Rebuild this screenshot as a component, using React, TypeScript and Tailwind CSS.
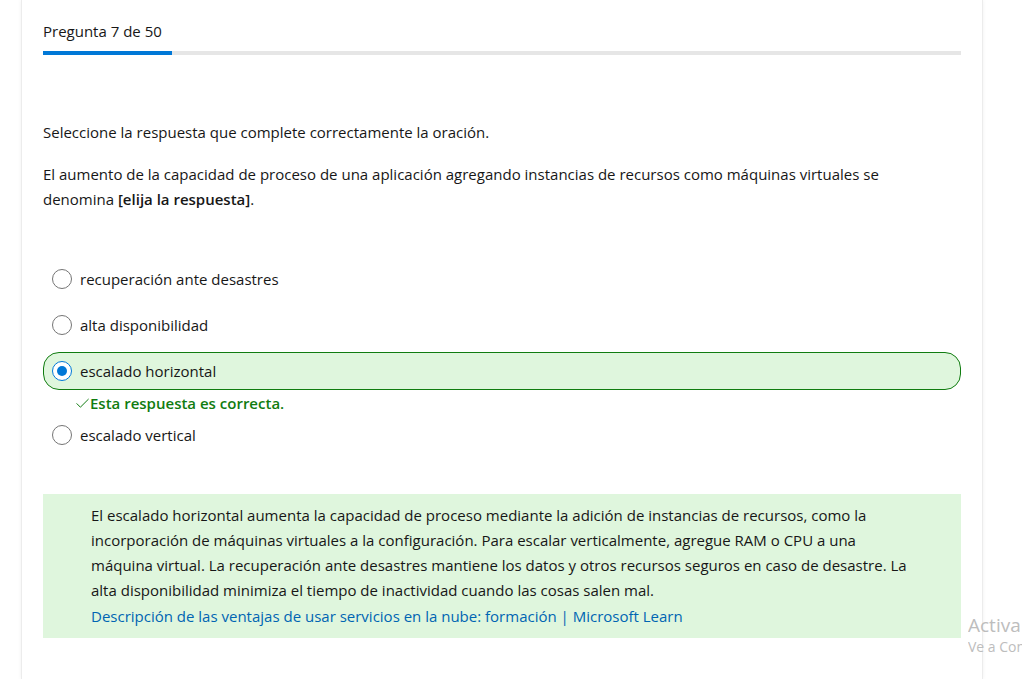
import { useState } from "react";

const TOTAL = 50;
const PROGRESS = 7;

const options = [
  { id: "dr", label: "recuperación ante desastres" },
  { id: "ha", label: "alta disponibilidad" },
  { id: "out", label: "escalado horizontal", correct: true },
  { id: "up", label: "escalado vertical" },
];

function Check() {
  return (
    <svg viewBox="0 0 14 12" className="h-3 w-3.5 shrink-0" fill="none" stroke="currentColor" strokeWidth="1" aria-hidden="true">
      <path d="M0.6 6.4 4.4 10.2 12.6 2" />
    </svg>
  );
}

export default function App() {
  const [selected, setSelected] = useState("out");

  return (
    <div className="relative min-h-screen overflow-hidden bg-white font-['Open_Sans','Noto_Sans',sans-serif] text-[15px] leading-[25px] text-[#171717]">
      <main className="ml-[21px] mr-[39px] min-h-screen border-x border-[#ececec] px-[21px] pb-10 pt-[19px] shadow-[0_0_4px_rgba(0,0,0,0.06)]">
        <p id="progress-label">Pregunta 7 de 50</p>
        <div
          role="progressbar"
          aria-labelledby="progress-label"
          aria-valuenow={PROGRESS}
          aria-valuemax={TOTAL}
          className="mt-[7px] h-1 bg-[#e6e6e6]"
        >
          <div className="h-full bg-[#0078d7]" style={{ width: `${(PROGRESS / TOTAL) * 100}%` }} />
        </div>

        <div className="mt-[65px] pr-10">
          <p>Seleccione la respuesta que complete correctamente la oración.</p>
          <p className="mt-[17px]">
            El aumento de la capacidad de proceso de una aplicación agregando instancias de recursos como máquinas virtuales se
            denomina <strong className="font-semibold">[elija la respuesta]</strong>.
          </p>
        </div>

        <fieldset className="mt-12" aria-label="Respuesta">
          {options.map((o) => {
            const checked = selected === o.id;
            const right = checked && o.correct;
            return (
              <div key={o.id} className={right ? "" : "mb-2 last:mb-0"}>
                <label
                  className={`flex h-[38px] items-center gap-2 rounded-2xl border px-2 ${
                    right ? "border-[#107c10] bg-[#dff6dd]" : "border-transparent"
                  }`}
                >
                  <input
                    type="radio"
                    name="answer"
                    value={o.id}
                    checked={checked}
                    onChange={() => setSelected(o.id)}
                    className="grid size-5 shrink-0 appearance-none place-items-center rounded-full border border-[#757575] bg-white before:size-2.5 before:rounded-full before:content-[''] checked:border-[#0078d7] checked:before:bg-[#0078d7]"
                  />
                  <span>{o.label}</span>
                </label>
                {right && (
                  <p className="flex h-[26px] items-center pl-[33px] font-semibold text-[#107c10]">
                    <Check />
                    Esta respuesta es correcta.
                  </p>
                )}
              </div>
            );
          })}
        </fieldset>

        <div className="mt-10 bg-[#dff6dd] px-12 py-[9px]">
          <p>
            El escalado horizontal aumenta la capacidad de proceso mediante la adición de instancias de recursos, como la
            incorporación de máquinas virtuales a la configuración. Para escalar verticalmente, agregue RAM o CPU a una
            máquina virtual. La recuperación ante desastres mantiene los datos y otros recursos seguros en caso de desastre. La
            alta disponibilidad minimiza el tiempo de inactividad cuando las cosas salen mal.
          </p>
          <p className="mt-px">
            <a href="#" className="text-[#0065b3]">
              Descripción de las ventajas de usar servicios en la nube: formación | Microsoft Learn
            </a>
          </p>
        </div>
      </main>

      <div className="pointer-events-none absolute bottom-[22px] right-0 w-[54px] overflow-hidden whitespace-nowrap text-[#bdbdbd]">
        <p className="text-[19px] leading-6">Activa</p>
        <p className="text-sm leading-5">Ve a Con</p>
      </div>
    </div>
  );
}
